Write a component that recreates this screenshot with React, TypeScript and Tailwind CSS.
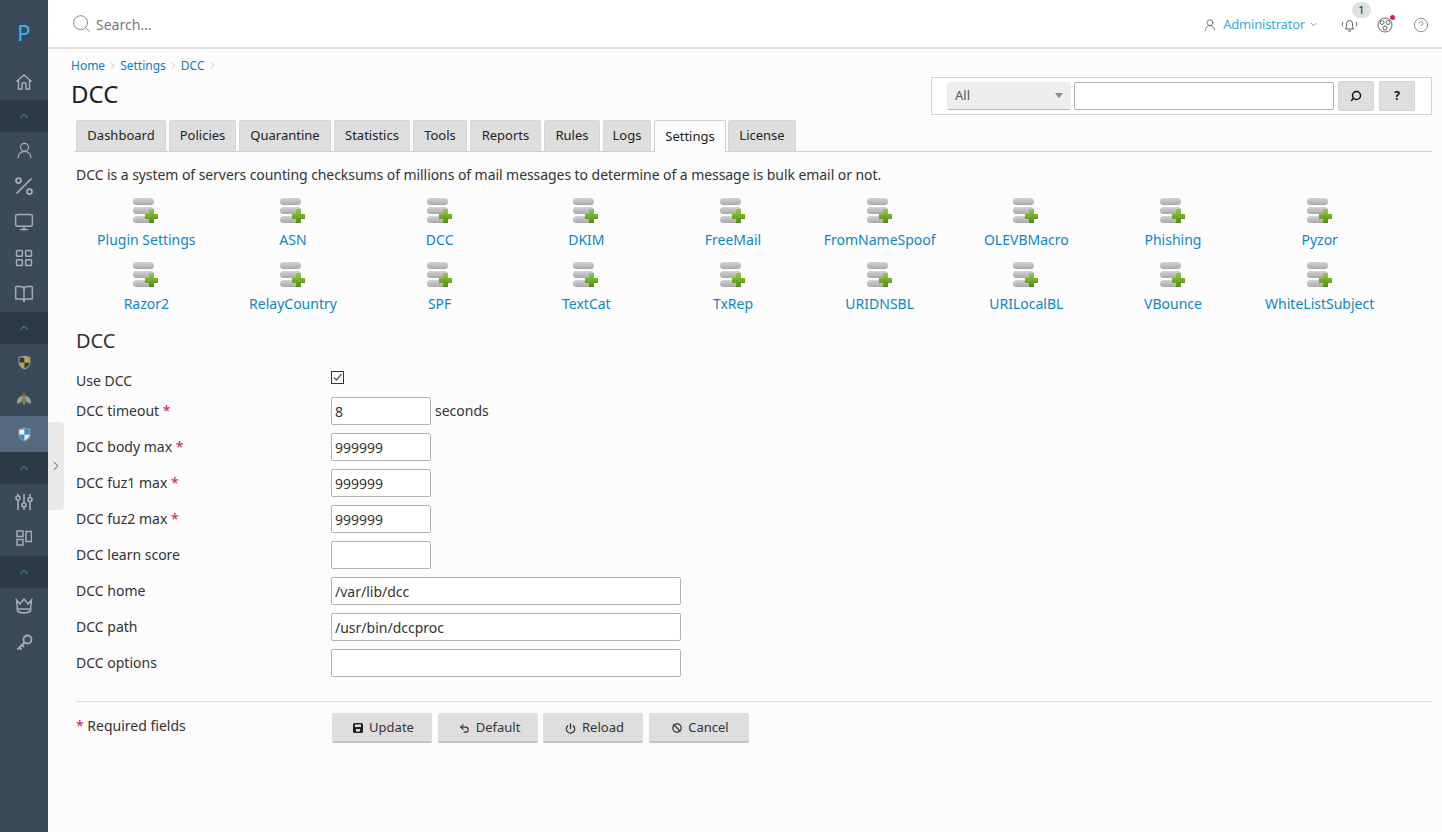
import { Ban, BookOpen, ChevronDown, ChevronRight, ChevronUp, CircleHelp, LayoutGrid, Monitor, Percent, Power, Search, Undo2, UserRound } from "lucide-react";
import type { ReactNode } from "react";

const tabs = [
  { name: "Dashboard", w: "w-[90px]" },
  { name: "Policies", w: "w-[67px]" },
  { name: "Quarantine", w: "w-[92px]" },
  { name: "Statistics", w: "w-[76px]" },
  { name: "Tools", w: "w-[54px]" },
  { name: "Reports", w: "w-[71px]" },
  { name: "Rules", w: "w-[56px]" },
  { name: "Logs", w: "w-[48px]" },
  { name: "Settings", w: "w-[72px]" },
  { name: "License", w: "w-[68px] -ml-px" },
];
const plugins = [
  "Plugin Settings", "ASN", "DCC", "DKIM", "FreeMail", "FromNameSpoof", "OLEVBMacro", "Phishing", "Pyzor",
  "Razor2", "RelayCountry", "SPF", "TextCat", "TxRep", "URIDNSBL", "URILocalBL", "VBounce", "WhiteListSubject",
];

function SideItem({ children, active }: { children: ReactNode; active?: boolean }) {
  return (
    <div className={`h-9 flex items-center justify-center text-[#a6aeb6] ${active ? "bg-[#556a7e]" : ""}`}>{children}</div>
  );
}

function SideDivider() {
  return (
    <div className="h-8 flex items-center justify-center bg-[#2c3947] text-[#3fb3ec]">
      <ChevronUp size={14} strokeWidth={1.5} />
    </div>
  );
}

function PluginIcon() {
  return (
    <svg width="34" height="26" viewBox="0 0 34 26">
      <defs>
        <linearGradient id="pill" x1="0" y1="0" x2="0" y2="1">
          <stop offset="0" stopColor="#d4d4d4" />
          <stop offset="1" stopColor="#a8a8a8" />
        </linearGradient>
        <linearGradient id="plus" x1="0" y1="0" x2="0" y2="1">
          <stop offset="0" stopColor="#96cc3c" />
          <stop offset="1" stopColor="#4f8f18" />
        </linearGradient>
      </defs>
      <rect x="4" y="0" width="21" height="7" rx="3.5" fill="url(#pill)" />
      <rect x="4" y="9" width="21" height="7" rx="3.5" fill="url(#pill)" />
      <rect x="4" y="18" width="21" height="7" rx="3.5" fill="url(#pill)" />
      <path d="M20 11h5v5h4v5h-4v4h-5v-4h-4v-5h4z" fill="url(#plus)" />
    </svg>
  );
}

function ShieldIcon({ a, b }: { a: string; b: string }) {
  return (
    <svg width="13" height="15" viewBox="0 0 13 15">
      <path d="M.5 2 6.500.5 12.500 2v5.500c0 3.500-3 5.800-6 7-3-1.200-6-3.500-6-7z" fill="#8f989f" />
      <path d="M1.500 2.700h5v5h-5z" fill={a} />
      <path d="M6.500 1.700l5 1v5h-5z" fill={b} />
      <path d="M1.500 7.700h5v5.500c-2.500-1-5-3-5-5.500z" fill={b} />
      <path d="M6.500 7.700h5c0 2.500-2.500 4.500-5 5.500z" fill={a} />
    </svg>
  );
}

function BeeIcon() {
  return (
    <svg width="16" height="15" viewBox="0 0 16 15">
      <path d="M7 5C3 4.500.500 9 1 12.500c2.500 0 5.500-2 6-5zM9 5c4-.500 6.500 4 6 7.500-2.500 0-5.500-2-6-5z" fill="#98a0a6" />
      <ellipse cx="8" cy="9" rx="1.800" ry="5" fill="#8a8244" />
      <circle cx="8" cy="3.500" r="1.500" fill="#77723f" />
      <path d="M7 2 6 .500M9 2l1-1.500" stroke="#77723f" strokeWidth=".7" />
    </svg>
  );
}

function SlidersIcon() {
  return (
    <svg width="18" height="18" viewBox="0 0 18 18" fill="none" stroke="currentColor" strokeWidth="1.600">
      <path d="M3 1v2M3 7.500V17M9 1v9M9 14v3M15 1v3.500M15 9v8" />
      <circle cx="3" cy="5" r="2" />
      <circle cx="9" cy="12" r="2" />
      <circle cx="15" cy="6.500" r="2" />
    </svg>
  );
}

function PanelsIcon() {
  return (
    <svg width="16" height="16" viewBox="0 0 16 16" fill="none" stroke="currentColor" strokeWidth="1.500">
      <rect x="1" y="1" width="6" height="5.500" />
      <rect x="1" y="9.500" width="6" height="5.500" />
      <rect x="10" y="1.500" width="5.500" height="10" />
    </svg>
  );
}

function CrownIcon() {
  return (
    <svg width="18" height="16" viewBox="0 0 18 16" fill="none" stroke="currentColor" strokeWidth="1.500">
      <path d="M1.500 2 5 6l4-5 4 5 3.500-4-1 9h-13z" />
      <path d="M2.500 11c-1 2 2 4 6.500 4s7.500-2 6.500-4" />
    </svg>
  );
}

function KeyIcon() {
  return (
    <svg width="17" height="17" viewBox="0 0 17 17" fill="none" stroke="currentColor" strokeWidth="1.800">
      <circle cx="11.500" cy="5.500" r="4" />
      <path d="M8.500 8.500 1.500 15.500M3.500 13.500l2 2M6 11l2 2" />
    </svg>
  );
}

function HomeIcon() {
  return (
    <svg width="18" height="18" viewBox="0 0 18 18" fill="none" stroke="currentColor" strokeWidth="1.500">
      <path d="M1.500 8.500 9 2l7.500 6.500M3.500 7.500V16h3.500v-4.500a2 2 0 0 1 4 0V16h3.500V7.500" />
    </svg>
  );
}

function BellIcon() {
  return (
    <svg width="17" height="16" viewBox="0 0 17 16" fill="none" stroke="#555" strokeWidth="1">
      <path d="M4.500 12c1-1.500 1-3 1-5.500a3 3 0 0 1 6 0c0 2.500 0 4 1 5.500zM7 14h3" />
      <path d="M2 5C1 6.500 1 8 2 9.500M15 5c1 1.500 1 3 0 4.500" />
    </svg>
  );
}

function FloppyIcon() {
  return (
    <svg width="10" height="10" viewBox="0 0 10 10">
      <path d="M1.500 0h7A1.500 1.500 0 0 1 10 1.500v7A1.500 1.500 0 0 1 8.500 10h-7A1.500 1.500 0 0 1 0 8.500v-7A1.500 1.500 0 0 1 1.500 0z" fill="#222" />
      <path d="M2 1.500h6V4H2zM3 6h4v2.500H3z" fill="#ddd" />
    </svg>
  );
}

function SupportIcon() {
  return (
    <svg width="16" height="16" viewBox="0 0 16 16" fill="none" stroke="#666" strokeWidth="1">
      <circle cx="8" cy="8" r="7" />
      <circle cx="5" cy="5.500" r="2" />
      <circle cx="11" cy="5.500" r="2" />
      <circle cx="8" cy="11" r="2" />
    </svg>
  );
}

function Field({ label, required, value, wide, children }: { label: string; required?: boolean; value?: string; wide?: boolean; children?: ReactNode }) {
  return (
    <div className="h-9 flex items-center">
      <div className="w-[255px] text-sm text-[#333]">
        {label} {required && <span className="text-[#c7254e]">*</span>}
      </div>
      <input
        readOnly
        value={value ?? ""}
        className={`h-7 px-[3px] bg-white text-sm text-[#333] border border-[#b3b3b3] rounded-[2px] outline-none ${wide ? "w-[350px]" : "w-[100px]"}`}
      />
      {children}
    </div>
  );
}

function ActionButton({ icon, label, className }: { icon: ReactNode; label: string; className: string }) {
  return (
    <button className={`h-[30px] pl-[3px] pt-[2px] flex items-center justify-center gap-[6px] bg-[#dedede] border-b-2 border-[#c2c2c2] rounded-[2px] text-[13px] text-[#333] ${className}`}>
      {icon}
      {label}
    </button>
  );
}

export default function App() {
  return (
    <div className="h-[832px] flex overflow-hidden bg-[#fcfcfc] font-['Open_Sans',sans-serif]">
      {/* Sidebar */}
      <aside className="w-12 shrink-0 bg-[#3a4a5b]">
        <div className="h-16 flex items-center justify-center text-[22px] text-[#3fb3ec]">P</div>
        <SideItem><HomeIcon /></SideItem>
        <SideDivider />
        <SideItem><UserRound size={19} strokeWidth={1.5} /></SideItem>
        <SideItem><Percent size={24} strokeWidth={1.75} /></SideItem>
        <SideItem><Monitor size={20} strokeWidth={1.75} /></SideItem>
        <SideItem><LayoutGrid size={20} strokeWidth={1.75} /></SideItem>
        <SideItem><BookOpen size={20} strokeWidth={1.75} /></SideItem>
        <SideDivider />
        <SideItem><ShieldIcon a="#2f353a" b="#b9a83a" /></SideItem>
        <SideItem><BeeIcon /></SideItem>
        <SideItem active><ShieldIcon a="#eef2f5" b="#2f8fd6" /></SideItem>
        <SideDivider />
        <SideItem><SlidersIcon /></SideItem>
        <SideItem><PanelsIcon /></SideItem>
        <SideDivider />
        <SideItem><CrownIcon /></SideItem>
        <SideItem><KeyIcon /></SideItem>
      </aside>

      <div className="flex-1 min-w-0 relative">
        {/* Collapsed panel handle */}
        <div className="absolute left-0 top-[422px] w-4 h-[88px] bg-[#e9e9e9] rounded-r flex items-center justify-center text-[#444]">
          <ChevronRight size={14} strokeWidth={1.5} />
        </div>

        {/* Top bar */}
        <header className="h-[49px] bg-white border-b-2 border-[#dcdcdc] flex items-center pl-[23px] pr-[13px]">
          <Search size={21} strokeWidth={1} className="text-[#777]" />
          <span className="ml-[4px] pt-[2px] text-sm text-[#777]">Search...</span>
          <div className="ml-auto mt-[2px] flex items-center">
            <UserRound size={14} strokeWidth={1.25} className="text-[#555]" />
            <span className="ml-[6px] text-[13px] tracking-[-0.2px] text-[#36a9e1]">Administrator</span>
            <ChevronDown size={9} className="ml-[4px] text-[#666]" />
            <div className="relative ml-[23px]">
              <BellIcon />
              <span className="absolute -top-[15px] left-[11px] w-[19px] h-4 rounded-full bg-[#e0e0e0] text-[11px] leading-4 text-center text-[#222]">1</span>
            </div>
            <div className="relative ml-[19px]">
              <SupportIcon />
              <span className="absolute -top-[2px] right-[-2px] w-[5px] h-[5px] rounded-full bg-[#d9204f]" />
            </div>
            <CircleHelp size={16} strokeWidth={1} className="ml-[20px] text-[#555]" />
          </div>
        </header>

        <main className="pl-[23px] pr-[10px]">
          {/* Breadcrumb */}
          <nav className="h-[17px] mt-[8px] flex items-center text-xs text-[#0f7fb5]">
            Home <ChevronRight size={11} strokeWidth={1} className="mx-[2px] text-[#888]" />
            Settings <ChevronRight size={11} strokeWidth={1} className="mx-[2px] text-[#888]" />
            DCC <ChevronRight size={11} strokeWidth={1} className="mx-[2px] text-[#888]" />
          </nav>

          {/* Title + record search */}
          <div className="flex justify-between items-start mt-[3px]">
            <h1 className="text-2xl leading-[34px] text-[#222]">DCC</h1>
            <div className="w-[501px] h-[38px] bg-white border border-[#d4d4d4] flex items-center pl-[15px]">
              <div className="w-[124px] h-7 px-2 bg-[#eeeeee] border-b border-[#b0b8c0] rounded-[3px] flex items-center justify-between text-[13px] text-[#555]">
                All
                <span className="border-x-[4px] border-x-transparent border-t-[5px] border-t-[#888]" />
              </div>
              <input readOnly className="ml-[3px] w-[260px] h-7 bg-white border border-[#b3b3b3] rounded-[2px] outline-none" />
              <button className="ml-[4px] w-9 h-[30px] bg-[#dedede] border border-[#d4d4d4] rounded-[2px] flex items-center justify-center">
                <Search size={12} strokeWidth={3} className="text-[#111] -scale-x-100" />
              </button>
              <button className="ml-[5px] w-9 h-[30px] bg-[#dedede] border border-[#d4d4d4] rounded-[2px] text-xs font-bold text-[#111]">?</button>
            </div>
          </div>

          {/* Tabs */}
          <div className="mt-[5px] ml-[3px] pl-[2px] flex gap-[3px] h-8 border-b border-[#cfcfcf]">
            {tabs.map((t) => (
              <div
                key={t.name}
                className={`${t.w} h-8 flex items-center justify-center text-[13px] text-[#222] border border-b-0 rounded-t-[2px] ${
                  t.name === "Settings" ? "bg-[#fcfcfc] border-[#cfcfcf]" : "bg-[#dedede] border-[#d6d6d6] h-[31px]"
                }`}
              >
                {t.name}
              </div>
            ))}
          </div>

          <p className="mt-[13px] ml-[5px] text-sm tracking-[-0.065px] leading-[20px] text-[#333]">
            DCC is a system of servers counting checksums of millions of mail messages to determine of a message is bulk email or not.
          </p>

          {/* Plugin links */}
          <div className="mt-[13px] ml-[2px] w-[1320px] grid grid-cols-9">
            {plugins.map((p) => (
              <div key={p} className="h-16 flex flex-col items-center">
                <PluginIcon />
                <span className="mt-[6px] text-sm leading-[20px] text-[#0f87bf]">{p}</span>
              </div>
            ))}
          </div>

          <div className="ml-[5px]">
            <h2 className="mt-[2px] text-xl leading-[26px] text-[#333]">DCC</h2>

            {/* Form */}
            <div className="mt-[15px] h-[24px] flex items-center">
              <div className="w-[255px] text-sm text-[#333]">Use DCC</div>
              <span className="w-[13px] h-[13px] mb-[8px] border border-[#333] flex items-center justify-center">
                <svg width="11" height="11" viewBox="0 0 11 11" fill="none" stroke="#555" strokeWidth="1.200">
                  <path d="m2 5.500 2.500 2.500L9.500 2" />
                </svg>
              </span>
            </div>
            <Field label="DCC timeout" required value="8">
              <span className="ml-[4px] text-sm text-[#333]">seconds</span>
            </Field>
            <Field label="DCC body max" required value="999999" />
            <Field label="DCC fuz1 max" required value="999999" />
            <Field label="DCC fuz2 max" required value="999999" />
            <Field label="DCC learn score" />
            <Field label="DCC home" value="/var/lib/dcc" wide />
            <Field label="DCC path" value="/usr/bin/dccproc" wide />
            <Field label="DCC options" wide />

            <div className="mt-[20px] border-t border-[#dcdcdc] pt-[11px] flex">
              <div className="w-[256px] text-sm leading-[26px] text-[#333]">
                <span className="text-[#c7254e]">*</span> Required fields
              </div>
              <div className="flex gap-[6px]">
                <ActionButton className="w-[100px]" icon={<FloppyIcon />} label="Update" />
                <ActionButton className="w-[100px]" icon={<Undo2 size={11} strokeWidth={2.5} />} label="Default" />
                <ActionButton className="w-[100px] -ml-px" icon={<Power size={11} strokeWidth={3} />} label="Reload" />
                <ActionButton className="w-[100px]" icon={<Ban size={10} strokeWidth={3} />} label="Cancel" />
              </div>
            </div>
          </div>
        </main>
      </div>
    </div>
  );
}
